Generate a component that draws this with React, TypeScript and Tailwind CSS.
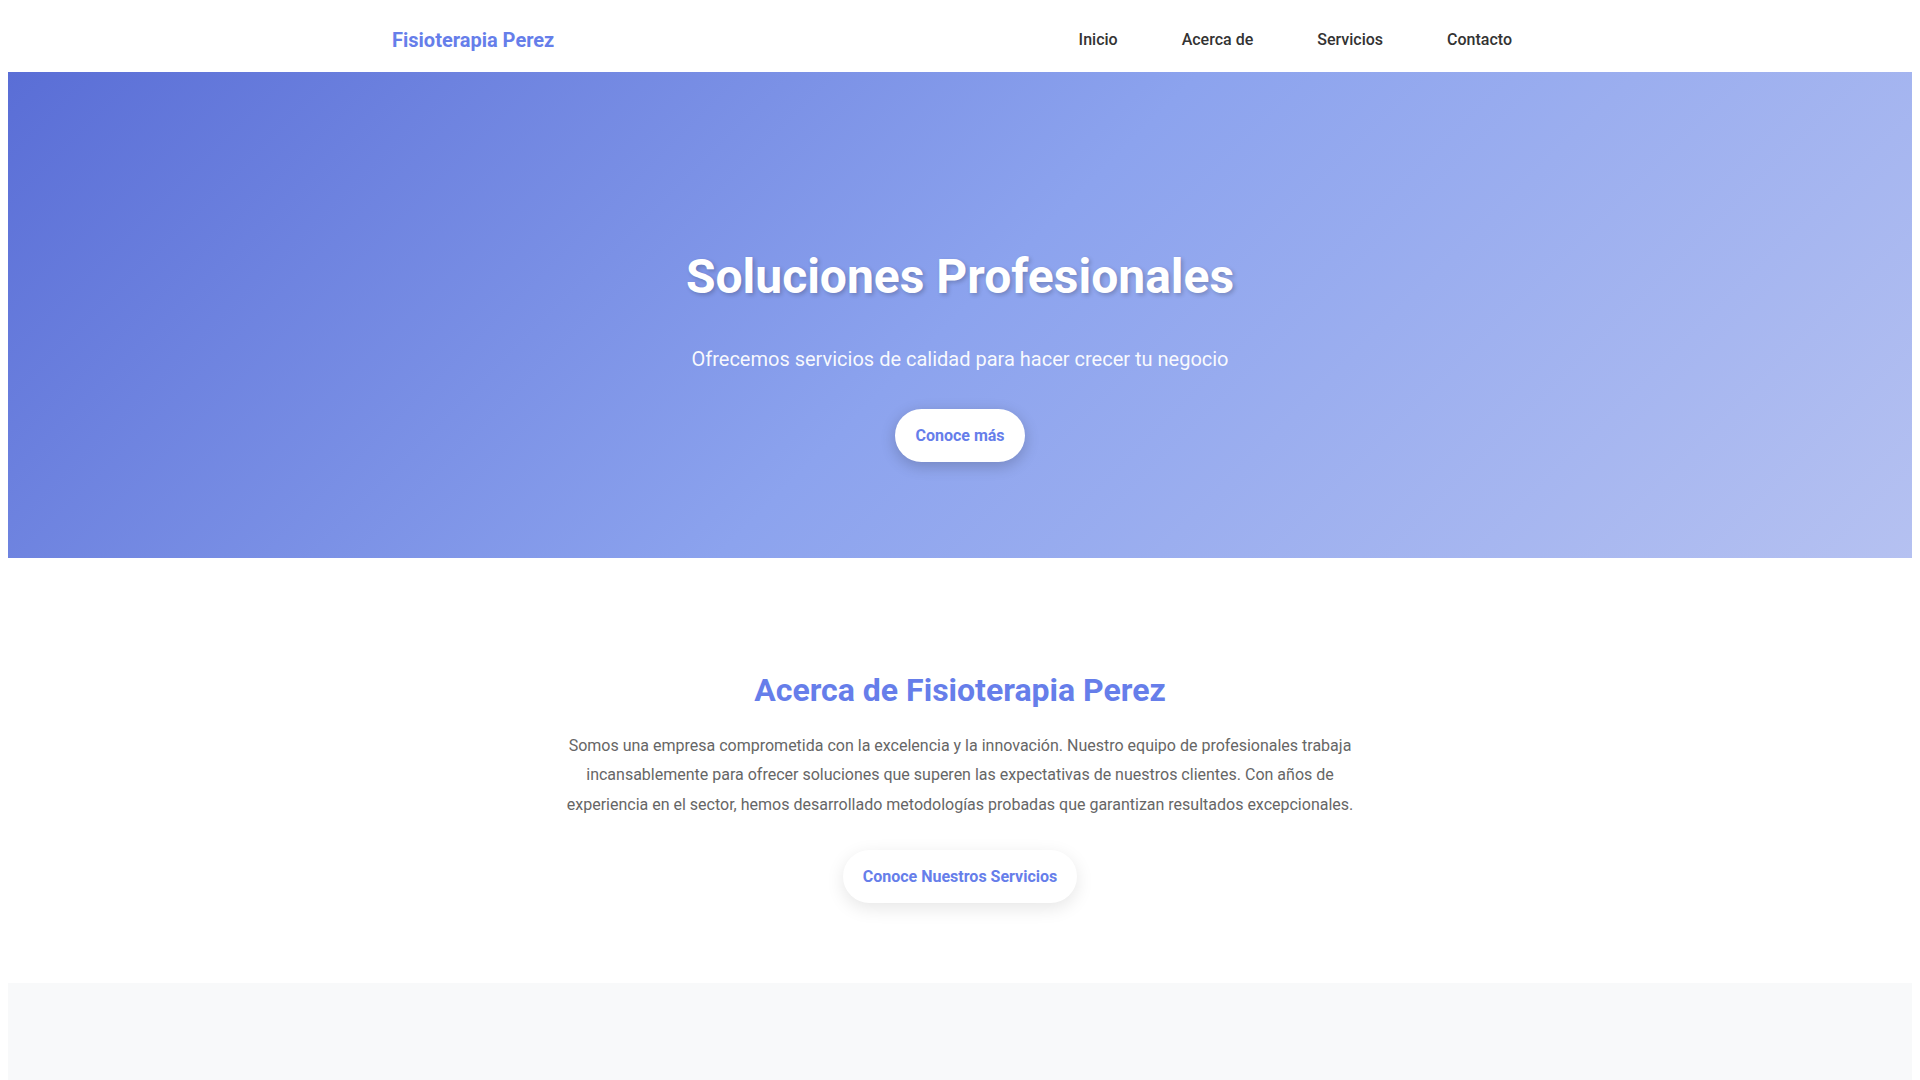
export default function App() {
  const links = ['Inicio', 'Acerca de', 'Servicios', 'Contacto'];

  return (
    <div className="min-h-screen bg-white p-2 font-['Roboto',sans-serif] text-[#333]">
      {/* Header */}
      <header className="bg-white">
        <nav className="mx-auto flex h-16 max-w-[1200px] items-center justify-between px-8">
          <a href="#" className="text-xl font-bold text-[#667eea]">
            Fisioterapia Perez
          </a>
          <ul className="flex items-center gap-8">
            {links.map((l) => (
              <li key={l}>
                <a href="#" className="px-4 py-2 text-base font-medium text-[#333]">
                  {l}
                </a>
              </li>
            ))}
          </ul>
        </nav>
      </header>

      {/* Hero */}
      <section className="bg-[linear-gradient(135deg,#5a6ed6_0%,#8ca3ee_50%,#b5c1f1_100%)] px-5 pt-[176px] pb-[96px] text-center text-white">
        <h1 className="mb-[38px] text-5xl leading-[1.2] font-bold [text-shadow:2px_2px_4px_rgba(0,0,0,0.2)]">
          Soluciones Profesionales
        </h1>
        <p className="mb-[35px] text-xl leading-[30px] text-white/95">
          Ofrecemos servicios de calidad para hacer crecer tu negocio
        </p>
        <a
          href="#"
          className="inline-block rounded-full bg-white px-5 py-[14px] text-base leading-[25px] font-bold text-[#667eea] shadow-[0_4px_15px_rgba(0,0,0,0.2)]"
        >
          Conoce más
        </a>
      </section>

      {/* About */}
      <section className="bg-white px-5 pt-[113px] pb-20 text-center">
        <h2 className="mb-[22px] text-[2rem] leading-[1.2] font-bold text-[#667eea]">
          Acerca de Fisioterapia Perez
        </h2>
        <p className="mx-auto mb-[31px] max-w-[800px] text-base leading-[1.84] text-[#666]">
          Somos una empresa comprometida con la excelencia y la innovación. Nuestro equipo de
          profesionales trabaja incansablemente para ofrecer soluciones que superen las
          expectativas de nuestros clientes. Con años de experiencia en el sector, hemos
          desarrollado metodologías probadas que garantizan resultados excepcionales.
        </p>
        <a
          href="#"
          className="inline-block rounded-full bg-white px-5 py-[14px] text-base leading-[25px] font-bold text-[#667eea] shadow-[0_5px_18px_rgba(0,0,0,0.1)]"
        >
          Conoce Nuestros Servicios
        </a>
      </section>

      {/* Services (below the fold) */}
      <section className="h-[400px] bg-[#f8f9fa]" />
    </div>
  );
}
